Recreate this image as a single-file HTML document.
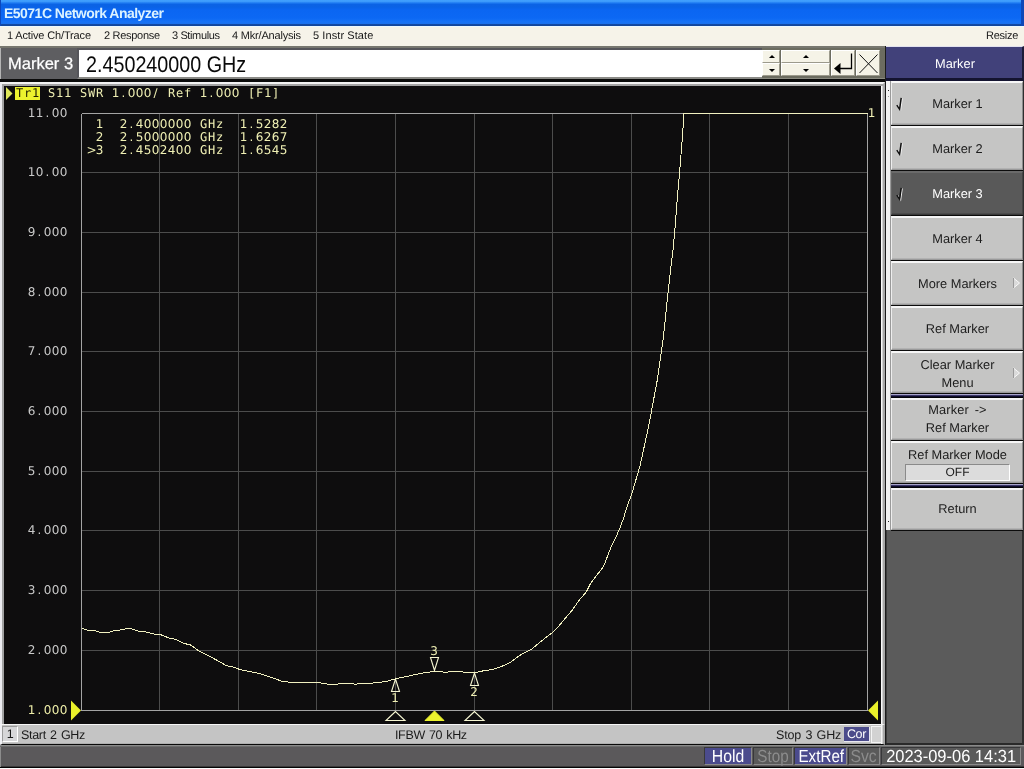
<!DOCTYPE html>
<html lang="en">
<head>
<meta charset="utf-8">
<title>E5071C Network Analyzer</title>
<style>
*{box-sizing:border-box;margin:0;padding:0}
html,body{width:1024px;height:769px;overflow:hidden;background:#5b5b5b}
body{position:relative;will-change:transform;-webkit-font-smoothing:antialiased;text-rendering:geometricPrecision;font-family:"Liberation Sans",sans-serif;font-size:12px;color:#222}
.abs{position:absolute}
#title{left:0;top:0;width:1024px;height:26px;
 background:linear-gradient(to bottom,#41a1fe 0,#3c9afb 1.5px,#1d7af1 3px,#0b63e5 4.5px,#0a62e6 7px,#0b66f2 10px,#0c68f4 18px,#1772f6 22px,#1a70ec 23.6px,#12459c 24.6px,#12459c 26px);box-shadow:inset -3px 0 0 #0e48b8, inset 1px 0 0 #0d48bc}
#title span{position:absolute;left:4px;top:5px;font-weight:bold;font-size:14px;line-height:16px;color:#dcf3ff;white-space:nowrap;letter-spacing:-0.52px}
#menu{left:0;top:26px;width:1024px;height:20px;background:#f6f3e9;border-top:1px solid #edf9fe;font-size:11px;line-height:15px;color:#181818;letter-spacing:-0.15px}
#menu span{position:absolute;top:2px;white-space:nowrap}

#entry{left:0;top:46px;width:886px;height:36px;background:#5e5e61;box-shadow:inset 1px 0 0 #b4b4b4;border-top:2px solid #77776f;border-bottom:3px solid #0b0b0b}
#elabel{left:8px;top:6px;font-size:16.5px;line-height:20px;color:#fff;white-space:nowrap;-webkit-text-stroke:0.25px #fff}
#einput{left:77px;top:0;width:685px;height:31px;background:#fff;border:2px solid #55555a;border-bottom-color:#8a8a86;border-right:0}
#einput span{position:absolute;left:7px;top:3px;font-size:22.5px;line-height:24px;color:#0a0a0a;white-space:nowrap;transform-origin:0 0;transform:scaleX(0.877)}
.eb{position:absolute;background:#f5f3e7;border:1px solid #fff;border-right-color:#9c9a8c;border-bottom-color:#9c9a8c}
#ebtns{left:762px;top:0;width:124px;height:31px;background:#6c6c60;border-bottom:1px solid #8a8a80}
.tri-u{position:absolute;width:0;height:0;border-left:3px solid transparent;border-right:3px solid transparent;border-bottom:3px solid #000}
.tri-d{position:absolute;width:0;height:0;border-left:3px solid transparent;border-right:3px solid transparent;border-top:3px solid #000}

#plotframe{left:0;top:82px;width:885px;height:663px;background:#0e0d0e;border-top:2px solid #f3f3f3;border-left:2px solid #ececf0;border-right:2px solid #a8a8a8;box-shadow:inset 0 2px 0 #a4a4a4, inset 2px 0 0 #a2a2a2, inset -1px 0 0 #d2d2d2, inset -2px 0 0 #fafafa}
#plotsvg{left:0;top:0}
#plotsvg text{font-family:"DejaVu Sans","Liberation Sans",sans-serif;font-size:12px;fill:#c9c9c9;white-space:pre;text-anchor:middle}
#plotsvg text .m{font-family:"DejaVu Sans Mono","Liberation Mono",monospace}
#plotsvg text.ref{fill:#eeeea8}
#plotsvg .g path{stroke:#4c4c4c;stroke-width:1;fill:none;shape-rendering:crispEdges}
#pstat{left:0;top:724px;width:885px;height:21px;background:#c4c4c4;border-top:1px solid #f6f6f6;border-bottom:1px solid #0a0a0a;border-left:2px solid #f0f0f4;border-right:2px solid #a8a8a8;box-shadow:inset -1px 0 0 #d2d2d2, inset -2px 0 0 #fafafa, inset 0 -1px 0 #b0b0b0;font-size:12.5px;line-height:14px;letter-spacing:-0.3px;word-spacing:1px;color:#1a1a1a}
#pstat span{position:absolute;white-space:nowrap;top:3px}

#soft{left:885px;top:46px;width:139px;height:699px;background:#5b5b5b;box-shadow:inset 1px 0 0 #1c1c1c, inset -2px 0 0 #2e2e2e, inset 0 -2px 0 #2a2a2a}
#shead{left:1px;top:0;width:138px;height:35px;background:#41417a;border-top:1px solid #e2e2ee;border-bottom:3px solid #141430;border-right:2px solid #1c1c38;color:#fff;text-align:center;font-size:12.8px;line-height:34px;padding-left:2px}
#split{left:0;top:35px;width:6px;height:449px;background:#f2f2f2;border-left:1px solid #1a1a1a;border-right:1px solid #9a9a9a}
.sk{position:absolute;left:6px;width:132px;height:44px;background:#c5c5c4;border-top:2px solid #f6f6f6;border-top-width:2px;border-left:1px solid #eeeeee;border-bottom:1px solid #9a9a9a;border-right:1px solid #8c8c8c;text-align:center;font-size:12.8px;line-height:18px;color:#1c1c1c;box-shadow:0 1px 0 #0c0c0c, inset 0 -1px 0 #b2b2b2}
.sk.sel{background:#595959;color:#fff;border-top-color:#6a6a6a;border-left-color:#666;border-bottom-color:#3a3a3a;border-right-color:#444;box-shadow:0 1px 0 #0c0c0c, inset 0 -1px 0 #4c4c4c}
.sk .t{position:absolute;left:1px;right:0;white-space:nowrap}
.sk svg{position:absolute}
.nav{position:absolute;left:6px;width:132px;height:4px;background:linear-gradient(to bottom,#a6a2c8 0,#a6a2c8 1px,#3a3668 1px,#3a3668 2px,#0e0c2a 2px,#0e0c2a 3px,#030308 3px)}
#status{left:0;top:745px;width:1024px;height:23px;background:#5b595b;border-top:1px solid #8a8a8a;border-bottom:1px solid #050505;box-shadow:inset 0 1px 0 #6c6c6c, inset 1px 0 0 #8c8c8c, inset 0 -1px 0 #3a3a3a}
#bottomline{left:0;top:768px;width:1024px;height:1px;background:#fdfdfd}
.sb{position:absolute;top:1px;height:18px;font-size:17.5px;line-height:17px;text-align:center;white-space:nowrap;border:1px solid #8a8a8a;border-top-color:#38383a;border-left-color:#38383a}
.sb span{display:inline-block;transform-origin:50% 50%}
.sb.on{background:#4b4b8d;color:#fff}
.sb.off{background:#5a5a5a;color:#8c8c8c}
</style>
</head>
<body>
<div id="title" class="abs"><span>E5071C Network Analyzer</span></div>
<div id="menu" class="abs">
<span style="left:7px">1 Active Ch/Trace</span>
<span style="left:104px;letter-spacing:-0.29px">2 Response</span>
<span style="left:172px;letter-spacing:-0.38px">3 Stimulus</span>
<span style="left:232px;letter-spacing:-0.19px">4 Mkr/Analysis</span>
<span style="left:313px;letter-spacing:0.08px">5 Instr State</span>
<span style="left:986px;letter-spacing:-0.25px">Resize</span>
</div>
<div id="entry" class="abs">
<div id="elabel" class="abs">Marker 3</div>
<div id="einput" class="abs"><span>2.450240000 GHz</span></div>
<div id="ebtns" class="abs">
<div class="eb" style="left:0;top:2px;width:18px;height:13px"><i class="tri-u" style="left:6px;top:4px"></i></div>
<div class="eb" style="left:0;top:15px;width:18px;height:13px"><i class="tri-d" style="left:6px;top:5px"></i></div>
<div class="eb" style="left:19px;top:2px;width:49px;height:13px"><i class="tri-u" style="left:21px;top:4px"></i></div>
<div class="eb" style="left:19px;top:15px;width:49px;height:13px"><i class="tri-d" style="left:21px;top:5px"></i></div>
<div class="eb" style="left:69px;top:2px;width:24px;height:26px"><svg width="24" height="26" viewBox="0 0 24 26" style="position:absolute;left:-1px;top:-1px"><path d="M20.5 3.5V18.5H8" fill="none" stroke="#000" stroke-width="1.3"/><path d="M3 18.5L9.5 13V24Z" fill="#000"/></svg></div>
<div class="eb" style="left:94px;top:2px;width:24px;height:26px"><svg width="24" height="26" viewBox="0 0 24 26" style="position:absolute;left:-1px;top:-1px"><path d="M3.5 4.5L21.5 23M21.5 4.5L3.5 23" fill="none" stroke="#111" stroke-width="1"/></svg></div>
</div>
</div>
<div id="plotframe" class="abs"></div>
<svg id="plotsvg" class="abs" width="885" height="745" viewBox="0 0 885 745">
<g class="g"><path d="M159.5 113.5V710.5"/><path d="M238.5 113.5V710.5"/><path d="M316.5 113.5V710.5"/><path d="M395.5 113.5V710.5"/><path d="M474.5 113.5V710.5"/><path d="M552.5 113.5V710.5"/><path d="M631.5 113.5V710.5"/><path d="M709.5 113.5V710.5"/><path d="M788.5 113.5V710.5"/><path d="M81.5 172.5H867.5"/><path d="M81.5 232.5H867.5"/><path d="M81.5 292.5H867.5"/><path d="M81.5 351.5H867.5"/><path d="M81.5 411.5H867.5"/><path d="M81.5 471.5H867.5"/><path d="M81.5 530.5H867.5"/><path d="M81.5 590.5H867.5"/><path d="M81.5 650.5H867.5"/></g>
<path d="M81.5 113.5V710.5H867.5V113.5" fill="none" stroke="#a4a4a4" stroke-width="1" shape-rendering="crispEdges"/>
<path d="M81.5 113.5H867.5" fill="none" stroke="#a4a4a4" stroke-width="1" shape-rendering="crispEdges"/>
<path d="M81.9 628.3 L87.7 630.1 L95.5 630.7 L100.4 632.5 L108.2 632.5 L115 630.3 L121.9 629.9 L127.8 628.4 L132.6 629.1 L138.5 631.1 L146.3 632.1 L154.1 634 L160 634.4 L169.8 638.3 L175.6 639.3 L183.4 643.2 L191.2 645.2 L198.1 650.6 L212.7 657.9 L226.4 665.7 L232.3 666.6 L240.1 669.6 L247.9 671.1 L259.6 673.5 L268.4 676.6 L275.9 678.8 L281.7 681.4 L291.5 682.3 L316.9 682.3 L328.6 684.3 L348.1 683.7 L356 684.1 L377.4 682.7 L387.2 681.2 L395.5 678.8 L406.7 676.5 L420.4 673.4 L434.5 671.4 L445.8 672.2 L453.6 671.4 L465.3 672.2 L474.5 672.9 L483.4 670.8 L492.5 669.5 L501.6 666.4 L509.4 663 L521.1 654.5 L531.5 649.3 L543.2 639.6 L552.3 632.6 L558.8 626.1 L566 617.5 L572.4 610 L579.5 599.7 L586 592.4 L590.6 583.4 L596.4 575.7 L601.6 569.2 L604.9 563.3 L607.5 556.2 L611.4 546.4 L615.9 537.3 L619.8 528.2 L623.7 517.8 L626.5 508 L631.5 494.7 L640 466 L648.7 426 L657.3 380 L663 340 L665.2 320 L668.1 291.7 L670.7 268.8 L673.2 248.8 L675.2 225.9 L677.2 200 L679.5 173 L681.5 148.6 L683.3 124.3 L683.6 113.5 L867.5 113.5" fill="none" stroke="#f1f0c0" stroke-width="1" stroke-linejoin="round" shape-rendering="crispEdges"/>
<!-- active trace indicator -->
<path d="M6 87L12.5 93.5L6 100Z" fill="#dfe85a"/>
<rect x="15" y="87" width="25" height="13" fill="#ecf22e"/>
<text x="19.5 27.5 35.5" y="97" style="fill:#222200"><tspan class="m">Tr1</tspan></text>
<text x="51.5 59.5 67.5 75.5 83.5 91.5 99.5 107.5 115.5 123.5 131.5 139.5 147.5 155.5 163.5 171.5 179.5 187.5 195.5 203.5 211.5 219.5 227.5 235.5 243.5 251.5 259.5 267.5 275.5" y="97" style="fill:#eeeeb2"><tspan class="m">S11</tspan> <tspan class="m">SWR</tspan> 1.000/ <tspan class="m">Ref</tspan> 1.000 <tspan class="m">[F1]</tspan></text>
<text x="31.5 39.5 47.5 55.5 63.5" y="117">11.00</text>
<text x="31.5 39.5 47.5 55.5 63.5" y="176">10.00</text>
<text x="31.5 39.5 47.5 55.5 63.5" y="236">9.000</text>
<text x="31.5 39.5 47.5 55.5 63.5" y="296">8.000</text>
<text x="31.5 39.5 47.5 55.5 63.5" y="355">7.000</text>
<text x="31.5 39.5 47.5 55.5 63.5" y="415">6.000</text>
<text x="31.5 39.5 47.5 55.5 63.5" y="475">5.000</text>
<text x="31.5 39.5 47.5 55.5 63.5" y="534">4.000</text>
<text x="31.5 39.5 47.5 55.5 63.5" y="594">3.000</text>
<text x="31.5 39.5 47.5 55.5 63.5" y="654">2.000</text>
<text x="31.5 39.5 47.5 55.5 63.5" y="714" class="ref">1.000</text>
<g style="fill:#f0f0b4">
<text x="99.5 107.5 115.5 123.5 131.5 139.5 147.5 155.5 163.5 171.5 179.5 187.5 195.5 203.5 211.5 219.5 227.5 235.5 243.5 251.5 259.5 267.5 275.5 283.5" y="128" style="fill:#f0f0b4">1  2.4000000 <tspan class="m">GHz</tspan>  1.5282</text>
<text x="99.5 107.5 115.5 123.5 131.5 139.5 147.5 155.5 163.5 171.5 179.5 187.5 195.5 203.5 211.5 219.5 227.5 235.5 243.5 251.5 259.5 267.5 275.5 283.5" y="141" style="fill:#f0f0b4">2  2.5000000 <tspan class="m">GHz</tspan>  1.6267</text>
<text x="91.5 99.5 107.5 115.5 123.5 131.5 139.5 147.5 155.5 163.5 171.5 179.5 187.5 195.5 203.5 211.5 219.5 227.5 235.5 243.5 251.5 259.5 267.5 275.5 283.5" y="154" style="fill:#f0f0b4">&gt;3  2.4502400 <tspan class="m">GHz</tspan>  1.6545</text>
<text x="871.5" y="116.5" style="fill:#f0f0b4">1</text>
</g>
<!-- reference level triangles -->
<path d="M71 700.5L81 710.5L71 720.5Z" fill="#e9f02a"/>
<path d="M878 700.5L868 710.5L878 720.5Z" fill="#e9f02a"/>
<!-- markers on trace -->
<g fill="none" stroke="#f6f6d2" stroke-width="1.1">
<path d="M395.5 679L391.5 691.5H399.5Z"/>
<path d="M474.5 673L470.5 685.5H478.5Z"/>
<path d="M434.5 670.5L430.5 657.5H438.5Z"/>
<path d="M395.5 711.5L386 720.5H405Z"/>
<path d="M474.5 711.5L465 720.5H484Z"/>
</g>
<path d="M434.5 711L425 720.5H444Z" fill="#ecf22e" stroke="#ecf22e" stroke-width="1"/>
<text x="395" y="701.5" style="fill:#f0f0b4">1</text>
<text x="474" y="695.5" style="fill:#f0f0b4">2</text>
<text x="434" y="654.5" style="fill:#f0f0b4">3</text>
</svg>
<div id="pstat" class="abs">
<div class="abs" style="left:0;top:1px;width:16px;height:16px;background:#d6d6d8;border:1px solid #fff;border-left-color:#9a9a9a;border-top-color:#9a9a9a;text-align:center;line-height:14px">1</div>
<span style="left:19px">Start 2 GHz</span>
<span style="left:393px;letter-spacing:-0.35px">IFBW 70 kHz</span>
<span style="left:774px;letter-spacing:-0.15px">Stop 3 GHz</span>
<div class="abs" style="left:842px;top:2px;width:26px;height:15px;background:#4b4b8b;color:#fff;text-align:center;line-height:14px;border-bottom:1px solid #e8e8f0;border-right:1px solid #e8e8f0">Cor</div>
<div class="abs" style="left:869px;top:1px;width:11px;height:17px;background:#d2d2d2;border:1px solid #f4f4f4"></div>
</div>
<div id="soft" class="abs">
<div id="shead" class="abs">Marker</div>
<div class="abs" style="left:1px;top:484px;width:1px;height:213px;background:#3c3c3c"></div>
<div id="split" class="abs"><i style="position:absolute;left:2px;top:9px;width:1px;height:1px;background:#222"></i><i style="position:absolute;left:2px;top:15px;width:1px;height:1px;background:#999"></i><i style="position:absolute;left:2px;top:440px;width:1px;height:1px;background:#222"></i></div>
<div class="sk" style="top:35px;height:44px"><svg width="10" height="16" viewBox="0 0 10 16" style="left:4px;top:13px"><path d="M1.8 9.7L4.6 13.8L6.2 2.3" fill="none" stroke="#f4f4f4" stroke-width="1.2"/><path d="M0.8 9.2L3.6 13.3L5.2 1.8" fill="none" stroke="#111" stroke-width="1.5"/></svg><span class="t" style="top:12px">Marker 1</span></div>
<div class="sk" style="top:80px;height:44px"><svg width="10" height="16" viewBox="0 0 10 16" style="left:4px;top:13px"><path d="M1.8 9.7L4.6 13.8L6.2 2.3" fill="none" stroke="#f4f4f4" stroke-width="1.2"/><path d="M0.8 9.2L3.6 13.3L5.2 1.8" fill="none" stroke="#111" stroke-width="1.5"/></svg><span class="t" style="top:12px">Marker 2</span></div>
<div class="sk sel" style="top:125px;height:44px"><svg width="10" height="16" viewBox="0 0 10 16" style="left:4px;top:13px"><path d="M1.8 9.7L4.6 13.8L6.2 2.3" fill="none" stroke="#f4f4f4" stroke-width="1.2"/><path d="M0.8 9.2L3.6 13.3L5.2 1.8" fill="none" stroke="#111" stroke-width="1.5"/></svg><span class="t" style="top:12px">Marker 3</span></div>
<div class="sk" style="top:170px;height:44px"><span class="t" style="top:12px">Marker 4</span></div>
<div class="sk" style="top:215px;height:44px"><span class="t" style="top:12px">More Markers</span><svg width="10" height="14" viewBox="0 0 10 14" style="left:121px;top:14px"><path d="M0.5 1L6.5 6L0.5 11Z" fill="#dadada"/><path d="M0.5 1L6.5 6L0.5 11" fill="none" stroke="#f8f8f8" stroke-width="1"/><path d="M0.5 1V11" fill="none" stroke="#9a9a9a" stroke-width="1"/></svg></div>
<div class="sk" style="top:260px;height:44px"><span class="t" style="top:12px">Ref Marker</span></div>
<div class="sk" style="top:305px;height:42px"><span class="t" style="top:3px">Clear Marker</span><span class="t" style="top:21px">Menu</span><svg width="10" height="14" viewBox="0 0 10 14" style="left:121px;top:14px"><path d="M0.5 1L6.5 6L0.5 11Z" fill="#dadada"/><path d="M0.5 1L6.5 6L0.5 11" fill="none" stroke="#f8f8f8" stroke-width="1"/><path d="M0.5 1V11" fill="none" stroke="#9a9a9a" stroke-width="1"/></svg></div>
<div class="nav" style="top:348px"></div>
<div class="sk" style="top:352px;height:42px"><span class="t" style="top:1px;word-spacing:2px;letter-spacing:0.15px">Marker -&gt;</span><span class="t" style="top:19px">Ref Marker</span></div>
<div class="sk" style="top:395px;height:42px"><span class="t" style="top:3px">Ref Marker Mode</span><div style="position:absolute;left:13px;top:21px;width:105px;height:17px;background:#dcdcdc;border:1px solid #8a8a8a;border-right-color:#fff;border-bottom-color:#fff;line-height:15px;font-size:12px">OFF</div></div>
<div class="nav" style="top:438px"></div>
<div class="sk" style="top:442px;height:42px"><span class="t" style="top:10px">Return</span></div>
</div>
<div id="status" class="abs">
<div class="sb on" style="left:704px;width:48px"><span style="transform:scaleX(0.9)">Hold</span></div>
<div class="sb off" style="left:753px;width:40px"><span style="transform:scaleX(0.87)">Stop</span></div>
<div class="sb on" style="left:794px;width:53px"><span style="transform:scaleX(0.87)">ExtRef</span></div>
<div class="sb off" style="left:848px;width:32px"><span style="transform:scaleX(0.9)">Svc</span></div>
<div class="sb" style="left:881px;width:140px;color:#fff;background:#5a5a5a"><span style="transform:scaleX(0.94)">2023-09-06 14:31</span></div>
</div>
<div id="bottomline" class="abs"></div>
</body>
</html>
